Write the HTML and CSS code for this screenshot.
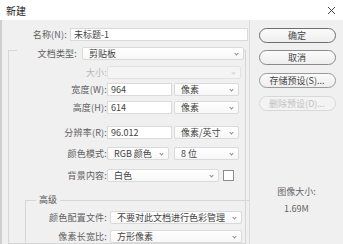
FILE: index.html
```html
<!DOCTYPE html>
<html lang="zh">
<head>
<meta charset="utf-8">
<link rel="stylesheet" href="styles.css">
</head>
<body>
<div class="dialog">
  <div class="titlebar">
    <span class="title">新建</span>
    <svg class="close" width="9" height="9" viewBox="0 0 9 9"><path d="M1 1 L8 8 M8 1 L1 8" stroke="#444" stroke-width="1" fill="none"/></svg>
  </div>
  <div class="body">
    <div class="main">
      <div class="row name-row">
        <span class="label name-label">名称(N):</span>
        <span class="field input name-input">未标题-1</span>
      </div>
      <fieldset class="group">
        <legend class="legend-row">
          <span class="label doc-label">文档类型:</span>
          <span class="field select doc-select">剪贴板<i class="chev"></i></span>
        </legend>
        <div class="row r-size">
          <span class="label disabled">大小:</span>
          <span class="field select disabled-field size-select"><i class="chev light"></i></span>
        </div>
        <div class="row r-width">
          <span class="label">宽度(W):</span>
          <span class="field input num">964</span>
          <span class="field select unit">像素<i class="chev"></i></span>
        </div>
        <div class="row r-height">
          <span class="label">高度(H):</span>
          <span class="field input num">614</span>
          <span class="field select unit">像素<i class="chev"></i></span>
        </div>
        <div class="row r-res">
          <span class="label">分辨率(R):</span>
          <span class="field input num">96.012</span>
          <span class="field select unit">像素/英寸<i class="chev"></i></span>
        </div>
        <div class="row r-mode">
          <span class="label">颜色模式:</span>
          <span class="field select mode">RGB 颜色<i class="chev"></i></span>
          <span class="field select unit">8 位<i class="chev"></i></span>
        </div>
        <div class="row r-bg">
          <span class="label">背景内容:</span>
          <span class="field select bg">白色<i class="chev"></i></span>
          <span class="swatch"></span>
        </div>
        <fieldset class="adv">
          <legend class="adv-legend">高级</legend>
          <div class="row r-profile">
            <span class="label adv-label">颜色配置文件:</span>
            <span class="field select wide">不要对此文档进行色彩管理<i class="chev"></i></span>
          </div>
          <div class="row r-aspect">
            <span class="label adv-label">像素长宽比:</span>
            <span class="field select wide">方形像素<i class="chev"></i></span>
          </div>
        </fieldset>
      </fieldset>
    </div>
    <div class="side">
      <button class="btn default">确定</button>
      <button class="btn b-cancel">取消</button>
      <button class="btn b-save">存储预设(S)...</button>
      <button class="btn b-del" disabled>删除预设(D)...</button>
      <div class="imgsize">
        <div>图像大小:</div>
        <div class="imgsize-val">1.69M</div>
      </div>
    </div>
  </div>
</div>
</body>
</html>
```
FILE: styles.css
```css
* { box-sizing: border-box; }
html, body {
  margin: 0;
  padding: 0;
}
body {
  width: 343px;
  height: 244px;
  overflow: hidden;
  font-family: "Noto Sans CJK SC", "Noto Sans", sans-serif;
  font-size: 9px;
  color: #444;
  background: #f0f0f0;
}
.dialog {
  height: 244px;
  display: flex;
  flex-direction: column;
}
.titlebar {
  height: 20px;
  flex: none;
  background: #ffffff;
  display: flex;
  align-items: center;
  justify-content: space-between;
  padding: 0 6px 0 6px;
}
.title {
  font-size: 10px;
  color: #222;
}
.close {
  display: block;
  margin-right: 1px;
}
.body {
  flex: 1;
  display: flex;
  background: #f0f0f0;
  border-left: 2px solid #cfcfcf;
  border-bottom: 2px solid #b9b9b9;
}
.main {
  width: 247px;
  flex: none;
}
.row {
  display: flex;
  align-items: center;
  height: 13px;
}
.label {
  flex: none;
  text-align: right;
  color: #606060;
  line-height: 13px;
  white-space: nowrap;
  letter-spacing: 0.2px;
}
.label.disabled { color: #b8b8b8; }
.field {
  flex: none;
  height: 13px;
  line-height: 12px;
  background: #fff;
  border: 1px solid #dadada;
  padding-left: 3px;
  color: #444;
  white-space: nowrap;
  overflow: hidden;
  position: relative;
}
.select {
  background: linear-gradient(#ffffff, #f7f7f7);
  border-radius: 2px;
  padding-left: 6px;
}
.chev {
  position: absolute;
  right: 5px;
  top: 4px;
  width: 3px;
  height: 3px;
  border-right: 1px solid #8a8a8a;
  border-bottom: 1px solid #8a8a8a;
  transform: rotate(45deg);
}
.chev.light { border-color: #cfcfcf; }

.name-row { margin-top: 8px; }
.name-label { width: 65px; }
.name-input { margin-left: 3px; width: 178px; }

.group {
  margin: -1px 0 0 6px;
  width: 238px;
  padding: 0;
  border: 1px solid #d6d6d6;
  min-width: 0;
}
.legend-row {
  display: flex;
  align-items: center;
  padding: 7px 0 0 0;
  margin-left: 8px;
}
.doc-label { width: 60px; line-height: 13px; }
.doc-select { margin-left: 5px; width: 162px; }

.group > .row .label { width: 98px; }
.group > .row .field:first-of-type { margin-left: 3px; }
.r-size { margin-top: 6px; }
.r-width { margin-top: 4px; }
.r-height { margin-top: 5px; }
.r-res { margin-top: 12px; }
.r-mode { margin-top: 8px; }
.r-bg { margin-top: 9px; }

.disabled-field {
  background: #f4f4f4;
  border-color: #e2e2e2;
}
.size-select { width: 134px; }
.num { width: 65px; }
.unit { width: 65px; margin-left: 2px; }
.mode { width: 62px; }
.mode + .unit { margin-left: 5px; }
.bg { width: 112px; }
.swatch {
  flex: none;
  width: 11px;
  height: 11px;
  margin-left: 4px;
  background: #fff;
  border: 1px solid #8c8c8c;
}

.adv {
  margin: 12px 0 0 16px;
  padding: 0;
  width: 224px;
  border: 1px solid #d6d6d6;
  border-right: none;
  border-bottom: none;
  min-width: 0;
}
.adv-legend {
  margin-left: 10px;
  padding: 0 3px;
  line-height: 12px;
  color: #555;
}
.adv-label { width: 81px; }
.adv .field { margin-left: 3px; }
.wide { width: 132px; }
.r-profile { margin-top: 5px; }
.r-aspect { margin-top: 6px; }

.side {
  flex: 1;
  border-left: 1px solid #dcdcdc;
  display: flex;
  flex-direction: column;
  align-items: center;
  padding-top: 8px;
}
.btn {
  width: 77px;
  height: 15px;
  padding: 0;
  border: 1px solid #8a8a8a;
  border-radius: 8px;
  background: linear-gradient(#fbfbfb, #eeeeee);
  font-family: inherit;
  font-size: 9px;
  color: #444;
  line-height: 13px;
  margin-left: 1px;
}
.btn.default { border-color: #6f6f6f; }
.b-cancel { margin-top: 7px; }
.b-save { margin-top: 8px; border-color: #9a9a9a; }
.b-del {
  margin-top: 8px;
  border-color: #d8d8d8;
  color: #c2c2c2;
  background: #f3f3f3;
}
.imgsize {
  margin-top: 75px;
  text-align: center;
  color: #666;
  font-size: 9px;
  line-height: 12px;
}
.imgsize-val { margin-top: 5px; }
```
